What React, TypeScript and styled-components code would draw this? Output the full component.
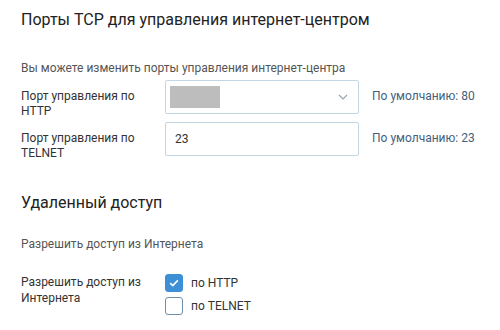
import React from "react";
import styled, { createGlobalStyle } from "styled-components";

const Global = createGlobalStyle`
  html, body { margin: 0; padding: 0; background: #fff; }
  body { font-family: Roboto, "Noto Sans", Arial, sans-serif; color: #333; }
`;

const Page = styled.div`
  width: 500px;
  height: 330px;
  box-sizing: border-box;
  padding: 10px 0 0 21px;
  overflow: hidden;
`;

const Title = styled.h2<{ $top?: number }>`
  margin: ${(p) => p.$top ?? 0}px 0 0 0;
  font-size: 16px;
  line-height: 20px;
  font-weight: 400;
  color: #222;
`;

const Desc = styled.p<{ $top: number }>`
  margin: ${(p) => p.$top}px 0 0 0;
  font-size: 12px;
  line-height: 16px;
  color: #555;
`;

const Row = styled.div<{ $top: number }>`
  display: grid;
  grid-template-columns: 144px 194px auto;
  align-items: start;
  margin-top: ${(p) => p.$top}px;
`;

const Label = styled.div<{ $pad?: number; $lh?: number }>`
  font-size: 12px;
  line-height: ${(p) => p.$lh ?? 15}px;
  color: #333;
  padding-top: ${(p) => p.$pad ?? 9}px;
  padding-right: 20px;
`;

const Field = styled.div`
  box-sizing: border-box;
  height: 34px;
  border: 1px solid #c3d6e4;
  border-radius: 2px;
  display: flex;
  align-items: center;
  padding: 0 10px 0 9px;
  font-size: 12px;
  color: #333;
`;

const SelectField = styled(Field)`
  padding: 0 10px 0 4px;
  justify-content: space-between;
`;

const Masked = styled.div`
  width: 50px;
  height: 22px;
  background: #bdbdbd;
`;

const Hint = styled.div`
  font-size: 12px;
  line-height: 15px;
  padding: 9px 0 0 13px;
  white-space: nowrap;
  color: #45607a;
`;

const Checks = styled.div`
  display: flex;
  flex-direction: column;
  gap: 5px;
`;

const CheckRow = styled.label`
  display: flex;
  align-items: center;
  gap: 8px;
  font-size: 12px;
  color: #333;
`;

const Box = styled.span<{ $on?: boolean }>`
  box-sizing: border-box;
  width: 18px;
  height: 18px;
  border-radius: 3px;
  border: 1px solid ${(p) => (p.$on ? "#3d8fd6" : "#6f8fae")};
  background: ${(p) => (p.$on ? "#3d8fd6" : "#fff")};
  display: flex;
  align-items: center;
  justify-content: center;
`;

const Chevron = () => (
  <svg width="10" height="6" viewBox="0 0 10 6">
    <path d="M1 1l4 4 4-4" fill="none" stroke="#9aa5ae" strokeWidth="1.2" />
  </svg>
);

const Tick = () => (
  <svg width="10" height="8" viewBox="0 0 10 8">
    <path d="M1.2 4.2l2.6 2.4L8.8 1.4" fill="none" stroke="#fff" strokeWidth="1.6" />
  </svg>
);

export default function App() {
  return (
    <Page>
      <Global />
      <Title>Порты TCP для управления интернет-центром</Title>
      <Desc $top={30}>Вы можете изменить порты управления интернет-центра</Desc>
      <Row $top={4}>
        <Label>Порт управления по HTTP</Label>
        <SelectField>
          <Masked />
          <Chevron />
        </SelectField>
        <Hint>По умолчанию: 80</Hint>
      </Row>
      <Row $top={3}>
        <Label>Порт управления по TELNET</Label>
        <Field>23</Field>
        <Hint>По умолчанию: 23</Hint>
      </Row>
      <Title $top={32}>Удаленный доступ</Title>
      <Desc $top={23}>Разрешить доступ из Интернета</Desc>
      <Row $top={22}>
        <Label $pad={0} $lh={16}>
          Разрешить доступ из Интернета
        </Label>
        <Checks>
          <CheckRow>
            <Box $on>
              <Tick />
            </Box>
            по HTTP
          </CheckRow>
          <CheckRow>
            <Box />
            по TELNET
          </CheckRow>
        </Checks>
      </Row>
    </Page>
  );
}
